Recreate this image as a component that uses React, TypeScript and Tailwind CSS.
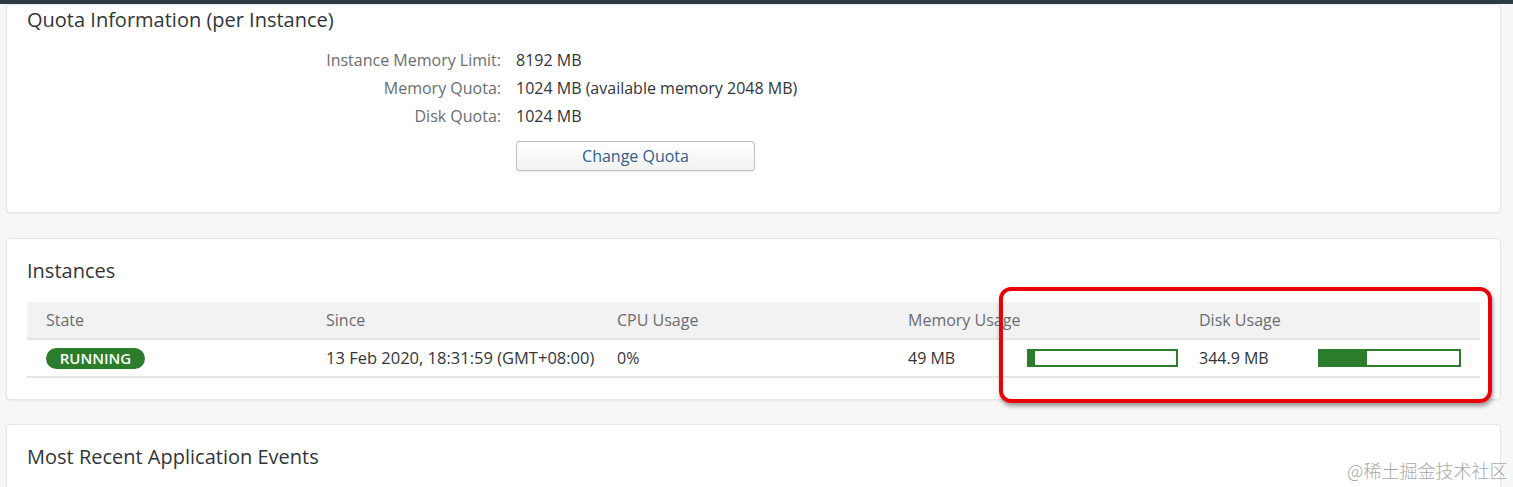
export default function App() {
  const font = { fontFamily: '"Open Sans", "Noto Sans", sans-serif' };

  const quota = [
    { label: 'Instance Memory Limit:', value: '8192 MB' },
    { label: 'Memory Quota:', value: '1024 MB (available memory 2048 MB)' },
    { label: 'Disk Quota:', value: '1024 MB' },
  ];

  return (
    <div
      className="relative h-[487px] w-full overflow-hidden bg-[#f7f7f7] text-[#32363a]"
      style={font}
    >
      {/* top shell bar */}
      <div className="h-[4px] bg-[#2c3a47]" />

      <div className="ml-[6px] mr-[12px]">
        {/* Quota card */}
        <div className="h-[209px] rounded-[4px] border border-[#e5e5e5] bg-white shadow-[0_1px_2px_rgba(0,0,0,0.06)]">
          <div className="pl-[20px] pt-[3px] text-[20px] leading-[24px] text-[#32363a]">
            Quota Information (per Instance)
          </div>
          <div className="mt-[14px] grid grid-cols-[494px_1fr] gap-x-[15px] text-[16px] leading-[28px]">
            {quota.map((q) => (
              <div key={q.label} className="contents">
                <div className="text-right text-[#6a6d70]">{q.label}</div>
                <div className="text-[#32363a]">{q.value}</div>
              </div>
            ))}
            <div />
            <div className="mt-[11px]">
              <button className="h-[30px] w-[239px] rounded-[3px] border border-[#bfbfbf] bg-gradient-to-b from-white to-[#f2f2f2] text-[16px] text-[#2f5f8a] shadow-[0_1px_1px_rgba(0,0,0,0.08)]">
                Change Quota
              </button>
            </div>
          </div>
        </div>

        {/* Instances card */}
        <div className="mt-[25px] h-[162px] rounded-[4px] border border-[#e5e5e5] bg-white px-[20px] pt-[20px] shadow-[0_1px_2px_rgba(0,0,0,0.06)]">
          <div className="text-[20px] leading-[24px]">Instances</div>
          <div className="mt-[19px] text-[16px]">
            <div className="grid h-[38px] grid-cols-[280px_291px_291px_291px_1fr] items-center border-b-2 border-[#e5e5e5] bg-[#f2f2f2] text-[#6a6d70]">
              <div className="pl-[19px]">State</div>
              <div className="pl-[19px]">Since</div>
              <div className="pl-[19px]">CPU Usage</div>
              <div className="pl-[19px]">Memory Usage</div>
              <div className="pl-[19px]">Disk Usage</div>
            </div>
            <div className="grid h-[38px] grid-cols-[280px_291px_291px_291px_1fr] items-center border-b-2 border-[#e5e5e5] text-[#32363a]">
              <div className="pl-[19px]">
                <span className="inline-flex h-[21px] w-[99px] items-center justify-center rounded-full bg-[#2b7d2b] text-[15px] font-semibold text-white">
                  RUNNING
                </span>
              </div>
              <div className="pl-[19px] text-[16.5px]">13 Feb 2020, 18:31:59 (GMT+08:00)</div>
              <div className="pl-[19px]">0%</div>
              <div className="flex items-center pl-[19px]">
                <span className="w-[119px]">49 MB</span>
                <div className="h-[18px] w-[151px] border-2 border-[#2b7d2b] bg-white">
                  <div className="h-full bg-[#2b7d2b]" style={{ width: '4%' }} />
                </div>
              </div>
              <div className="flex items-center pl-[19px]">
                <span className="w-[119px]">344.9 MB</span>
                <div className="h-[18px] w-[143px] border-2 border-[#2b7d2b] bg-white">
                  <div className="h-full bg-[#2b7d2b]" style={{ width: '34%' }} />
                </div>
              </div>
            </div>
          </div>
        </div>

        {/* Events card */}
        <div className="mt-[24px] h-[200px] rounded-[4px] border border-[#e5e5e5] bg-white px-[20px] pt-[20px] shadow-[0_1px_2px_rgba(0,0,0,0.06)]">
          <div className="text-[20px] leading-[24px]">Most Recent Application Events</div>
        </div>
      </div>

      {/* red annotation box */}
      <div className="absolute left-[999px] top-[287px] h-[116px] w-[493px] rounded-[12px] border-4 border-[#e8000b] shadow-[1px_3px_4px_rgba(0,0,0,0.4)]" />

      {/* watermark */}
      <div
        className="absolute left-[1347px] top-[457px] text-[18px] leading-[26px] text-[#a8a8a8]"
        style={{ fontFamily: '"Noto Sans CJK SC", sans-serif', fontWeight: 300 }}
      >
        @稀土掘金技术社区
      </div>
    </div>
  );
}
